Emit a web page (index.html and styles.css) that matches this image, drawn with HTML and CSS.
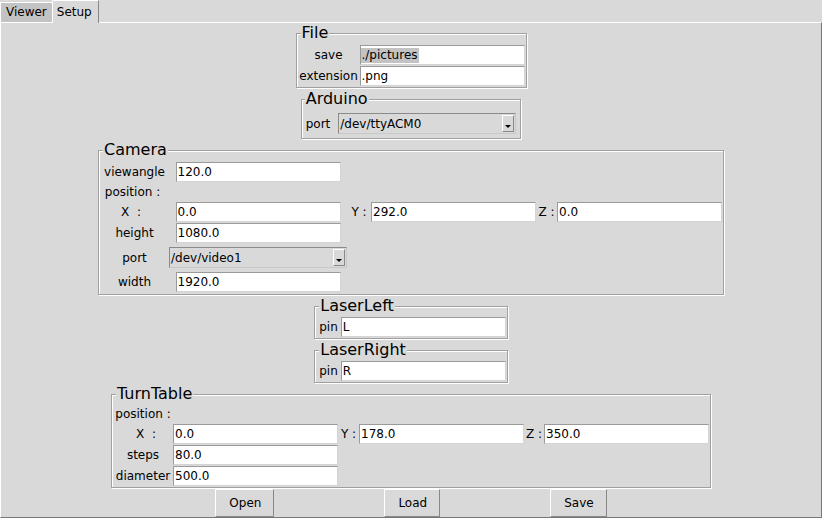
FILE: index.html
```html
<!DOCTYPE html>
<html>
<head>
<meta charset="utf-8">
<link rel="stylesheet" href="styles.css">
</head>
<body>
<div class="app">
  <div class="tabs">
    <div class="tab">Viewer</div>
    <div class="tab active">Setup</div>
  </div>
  <div class="pane">
    <fieldset class="group g-file">
      <legend>File</legend>
      <div class="grid file-grid">
        <div class="lbl">save</div><div class="entry"><span class="sel">./pictures</span></div>
        <div class="lbl">extension</div><div class="entry">.png</div>
      </div>
    </fieldset>

    <fieldset class="group g-arduino">
      <legend>Arduino</legend>
      <div class="row">
        <div class="lbl port-lbl">port</div>
        <div class="combo"><span>/dev/ttyACM0</span><span class="arrow"></span></div>
      </div>
    </fieldset>

    <fieldset class="group g-camera">
      <legend>Camera</legend>
      <div class="grid cam-grid">
        <div class="lbl c1">viewangle</div><div class="entry">120.0</div>
        <div class="lbl c1 cam-pos">position :</div>
        <div class="lbl c1 cam-x">X&nbsp; :</div><div class="entry">0.0</div>
        <div class="lbl">Y :</div><div class="entry">292.0</div>
        <div class="lbl">Z :</div><div class="entry">0.0</div>
        <div class="lbl c1">height</div><div class="entry">1080.0</div>
        <div class="lbl c1">port</div><div class="combo cam-combo"><span>/dev/video1</span><span class="arrow"></span></div>
        <div class="lbl c1">width</div><div class="entry">1920.0</div>
      </div>
    </fieldset>

    <fieldset class="group g-laser">
      <legend>LaserLeft</legend>
      <div class="grid laser-grid">
        <div class="lbl pin">pin</div><div class="entry">L</div>
      </div>
    </fieldset>

    <fieldset class="group g-laser">
      <legend>LaserRight</legend>
      <div class="grid laser-grid">
        <div class="lbl pin">pin</div><div class="entry">R</div>
      </div>
    </fieldset>

    <fieldset class="group g-turn">
      <legend>TurnTable</legend>
      <div class="grid turn-grid">
        <div class="lbl c1">position :</div>
        <div class="lbl c1 turn-x">X&nbsp; :</div><div class="entry">0.0</div>
        <div class="lbl">Y :</div><div class="entry">178.0</div>
        <div class="lbl">Z :</div><div class="entry">350.0</div>
        <div class="lbl c1">steps</div><div class="entry">80.0</div>
        <div class="lbl c1">diameter</div><div class="entry">500.0</div>
      </div>
    </fieldset>

    <div class="buttons">
      <div class="btn">Open</div>
      <div class="btn">Load</div>
      <div class="btn">Save</div>
    </div>
  </div>
</div>
</body>
</html>
```

FILE: styles.css
```css
* { box-sizing: border-box; }
html, body { margin: 0; padding: 0; }
body {
  width: 822px;
  height: 518px;
  overflow: hidden;
  background: #d9d9d9;
  color: #000;
  font-family: "DejaVu Sans", "Liberation Sans", sans-serif;
  font-size: 12px;
}
.app { display: flex; flex-direction: column; height: 518px; }

/* notebook tabs */
.tabs { display: flex; align-items: flex-end; height: 22px; position: relative; z-index: 1; }
.tab {
  height: 20px;
  padding: 0 5px;
  line-height: 19px;
  background: #c3c3c3;
  border-top: 1px solid #fff;
  border-left: 1px solid #fff;
}
.tab.active {
  height: 23px;
  margin-bottom: -1px;
  padding: 0 6px 0 4px;
  line-height: 22px;
  background: #d9d9d9;
  border-right: 1px solid #888;
  border-top-left-radius: 2px;
}

/* notebook pane */
.pane {
  flex: 1;
  display: flex;
  flex-direction: column;
  align-items: center;
  padding-top: 2px;
  border-top: 1px solid #fff;
  border-left: 1px solid #fff;
  border-right: 1px solid #777;
  border-bottom: 1px solid #777;
}

/* label frames */
.group {
  margin: 3px 0 0;
  padding: 4px 1px 1px;
  min-width: 0;
  border: 1px solid #a0a0a0;
  box-shadow: inset 1px 1px 0 #fff, 1px 1px 0 #fff;
}
.g-file { margin-top: 0; }
.group legend {
  font-size: 16px;
  line-height: 16px;
  padding: 0 1px;
  margin-left: 3px;
  background: #d9d9d9;
}
.g-arduino { padding: 6px 0 4px; }
.g-camera { padding: 4px 1px 2px; }
.g-laser { padding: 3px 1px 1px; }
.g-turn { padding: 3px 1px 1px; }

.grid { display: grid; row-gap: 1px; align-items: center; }
.file-grid { grid-template-columns: 62px 165px; }
.cam-grid { grid-template-columns: 69px 178px 24px 165px 21px 165px; }
.turn-grid { grid-template-columns: 60px 165px 21px 165px 20px 165px; }
.laser-grid { grid-template-columns: auto 165px; }

.row { display: flex; align-items: center; }

.lbl { text-align: center; line-height: 18px; white-space: nowrap; }
.c1 { grid-column: 1; }
.cam-x { padding-right: 7px; }
.cam-pos { padding-right: 4px; }
.turn-x { padding-left: 6px; }
.pin { padding: 0 3px; }
.port-lbl { padding: 0 4px; }
.cam-grid .entry { justify-self: center; }

/* entry fields */
.entry {
  width: 165px;
  height: 20px;
  padding-left: 1px;
  line-height: 18px;
  white-space: nowrap;
  overflow: hidden;
  background: #fff;
  border: 1px solid;
  border-color: #9a9a9a #d4d4d4 #d4d4d4 #9a9a9a;
}
.sel { display: inline-block; background: #c3c3c3; line-height: 15px; padding: 0 1px; margin-left: -1px; }

/* comboboxes */
.combo {
  width: 178px;
  height: 21px;
  margin: 0 4px;
  padding-left: 1px;
  display: flex;
  align-items: center;
  justify-content: space-between;
  background: #d9d9d9;
  border: 1px solid;
  border-color: #8a8a8a #c8c8c8 #c8c8c8 #8a8a8a;
  white-space: nowrap;
}
.cam-combo { margin: 3px 0; }
.combo .arrow {
  width: 12px;
  height: 17px;
  margin-right: 1px;
  padding-bottom: 3px;
  display: flex;
  align-items: flex-end;
  justify-content: center;
  border: 1px solid;
  border-color: #fff #888 #888 #fff;
}
.combo .arrow::after {
  content: "";
  border-top: 3px solid #000;
  border-left: 3px solid transparent;
  border-right: 3px solid transparent;
}

/* buttons */
.buttons { display: flex; gap: 110px; margin-top: 1px; }
.btn {
  height: 28px;
  padding: 0 12px 0 13px;
  line-height: 26px;
  background: #d9d9d9;
  border: 1px solid;
  border-color: #fff #888 #888 #fff;
}
```
